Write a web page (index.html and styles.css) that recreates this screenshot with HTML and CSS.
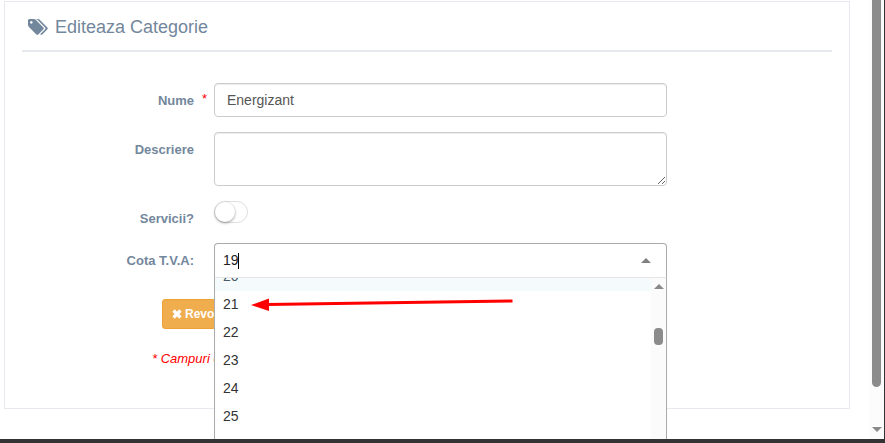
FILE: index.html
```html
<!DOCTYPE html>
<html lang="ro">
<head>
    <meta charset="UTF-8">
    <meta name="viewport" content="width=device-width, initial-scale=1.0">
    <title>Editeaza Categorie</title>
    <link rel="stylesheet" href="styles.css">
</head>
<body>
<div class="page">
    <div class="panel">
        <div class="panel-title">
            <svg class="icon-tags" viewBox="0 0 1920 1536" width="20" height="16">
                <path fill="currentColor" d="M448 320q0-53-37.500-90.500t-90.500-37.500-90.500 37.500-37.500 90.500 37.500 90.500 90.500 37.500 90.500-37.500 37.500-90.500zm1067 576q0 53-37 90l-491 492q-39 37-91 37-53 0-90-37l-715-716q-38-37-64.500-101t-26.500-117v-416q0-52 38-90t90-38h416q53 0 117 26.500t102 64.500l715 714q37 39 37 91zm384 0q0 53-37 90l-491 492q-39 37-91 37-36 0-59-14t-53-45l470-470q37-37 37-90 0-52-37-91l-715-714q-38-38-102-64.500t-117-26.500h224q53 0 117 26.500t102 64.500l715 714q37 39 37 91z"/>
            </svg>
            <h2>Editeaza Categorie</h2>
        </div>
        <form class="form">
            <div class="row">
                <label class="label" for="nume">Nume</label>
                <span class="mark">*</span>
                <input class="control" type="text" id="nume" value="Energizant">
            </div>
            <div class="row">
                <label class="label" for="descriere">Descriere</label>
                <span class="mark"></span>
                <textarea class="control area" id="descriere"></textarea>
            </div>
            <div class="row row-switch">
                <label class="label">Servicii?</label>
                <span class="mark"></span>
                <span class="switch"><small></small></span>
            </div>
            <div class="row row-select">
                <label class="label">Cota T.V.A:</label>
                <span class="mark"></span>
                <div class="select">
                    <div class="select-input">
                        <span class="value">19</span>
                        <span class="caret"></span>
                    </div>
                    <div class="dropdown">
                        <div class="options">
                            <div class="option active">20</div>
                            <div class="option">21</div>
                            <div class="option">22</div>
                            <div class="option">23</div>
                            <div class="option">24</div>
                            <div class="option">25</div>
                        </div>
                        <div class="scroll">
                            <span class="scroll-up"></span>
                            <span class="scroll-thumb"></span>
                        </div>
                    </div>
                </div>
            </div>
            <button class="button" type="button">
                <svg viewBox="0 0 10 10" width="10" height="10">
                    <path d="M1.500 1.500L8.500 8.500M8.500 1.500L1.500 8.500" stroke="#fff" stroke-width="3.200"/>
                </svg>
                Revocare
            </button>
            <p class="note">* Campuri obligatorii</p>
        </form>
    </div>
    <div class="page-scroll">
        <span class="page-thumb"></span>
        <span class="page-down"></span>
    </div>
</div>
<div class="bottom-bar"></div>

<svg class="arrow" width="264" height="20" viewBox="0 0 264 20">
    <path d="M17 11.500L262.500 8" stroke="#f00" stroke-width="3"/>
    <path d="M1 12L19 5.500V18z" fill="#f00"/>
</svg>
</body>
</html>
```

FILE: styles.css
```css
* {
  box-sizing: border-box;
}

body {
  margin: 0;
  height: 443px;
  overflow: hidden;
  font-family: "Liberation Sans", Arial, sans-serif;
  font-size: 13px;
  line-height: 18px;
  color: #73879c;
  background: #fff;
}

.page {
  display: flex;
  justify-content: space-between;
  height: 439px;
  padding-left: 4px;
  border-right: 1px solid #333;
}

.panel {
  width: 846px;
  height: 408px;
  margin-top: 1px;
  padding: 0 17px;
  border: 1px solid #e6e9ed;
}

.panel-title {
  display: flex;
  align-items: center;
  height: 50px;
  padding: 1px 0 0 6px;
  border-bottom: 2px solid #e6e9ed;
}

.panel-title h2 {
  margin: 0 0 0 7px;
  padding-top: 1px;
  font-size: 18px;
  font-weight: 400;
  line-height: 20px;
}

.icon-tags {
  display: block;
}

/* form rows */
.form {
  padding-top: 31px;
}

.row {
  display: flex;
  align-items: flex-start;
  margin-bottom: 15px;
}

.row-switch {
  height: 27px;
}

.row-select {
  height: 41px;
}

.label {
  width: 172px;
  padding-top: 9px;
  text-align: right;
  font-weight: 700;
}

.mark {
  width: 20px;
  padding: 7px 0 0 8px;
  color: #f00;
}

.control {
  display: block;
  width: 453px;
  height: 34px;
  margin: 0;
  padding: 6px 12px;
  font-family: inherit;
  font-size: 14px;
  line-height: 20px;
  color: #555;
  background: #fff;
  border: 1px solid #ccc;
  border-radius: 4px;
  box-shadow: inset 0 1px 1px rgba(0, 0, 0, 0.075);
}

.area {
  height: 54px;
}

.switch {
  width: 34px;
  height: 22px;
  border: 1px solid #dfdfdf;
  border-radius: 20px;
}

.switch small {
  display: block;
  width: 20px;
  height: 20px;
  background: #fff;
  border-radius: 100%;
  box-shadow: 0 1px 3px rgba(0, 0, 0, 0.4);
}

/* select with the list open */
.select {
  position: relative;
  width: 453px;
  font-size: 14px;
  color: #333;
}

.select-input {
  display: flex;
  align-items: center;
  justify-content: space-between;
  height: 35px;
  padding: 0 15px 0 8px;
  background: #fff;
  border: 1px solid #aaa;
  border-bottom-color: #e5e5e5;
  border-radius: 4px 4px 0 0;
}

.value {
  width: 16px;
  height: 16px;
  line-height: 15px;
  color: #222;
  border-right: 1px solid #000;
}

.caret {
  margin-bottom: 1px;
  border: 5px solid transparent;
  border-top: 0;
  border-bottom-color: #808080;
}

.dropdown {
  position: absolute;
  top: 35px;
  left: 0;
  display: flex;
  width: 453px;
  height: 161px;
  overflow: hidden;
  background: #fff;
  border: 1px solid #aaa;
  border-width: 0 1px;
}

.options {
  flex: 1;
  margin-top: -15px;
}

.option {
  height: 28px;
  padding: 0 8px;
  line-height: 26px;
}

.option.active {
  color: #495c68;
  background: #f5fafd;
}

.scroll {
  display: flex;
  flex-direction: column;
  align-items: center;
  width: 15px;
  padding-top: 6px;
  background: #fbfbfb;
}

.scroll-up {
  border: 5px solid transparent;
  border-top: 0;
  border-bottom-color: #8a8a8a;
}

.scroll-thumb {
  width: 9px;
  height: 17px;
  margin-top: 39px;
  background: #8b8b8b;
  border-radius: 4px;
}

/* under the form */
.button {
  display: flex;
  align-items: center;
  gap: 3px;
  height: 30px;
  margin: 0 0 0 140px;
  padding: 0 9px;
  font-family: inherit;
  font-size: 12px;
  font-weight: 700;
  color: #fff;
  background: #f0ad4e;
  border: 1px solid #eea236;
  border-radius: 3px;
}

.note {
  margin: 21px 0 0 130px;
  font-style: italic;
  color: #f00;
}

/* window edges */
.page-scroll {
  display: flex;
  flex-direction: column;
  align-items: center;
  width: 15px;
  background: #fcfcfc;
}

.page-thumb {
  width: 9px;
  height: 387px;
  background: #8b8b8b;
  border-radius: 0 0 5px 5px;
}

.page-down {
  margin-top: 40px;
  border: 5px solid transparent;
  border-bottom: 0;
  border-top-color: #8a8a8a;
}

.bottom-bar {
  height: 4px;
  background: #333;
}

.arrow {
  position: absolute;
  top: 293px;
  left: 250px;
}
```
